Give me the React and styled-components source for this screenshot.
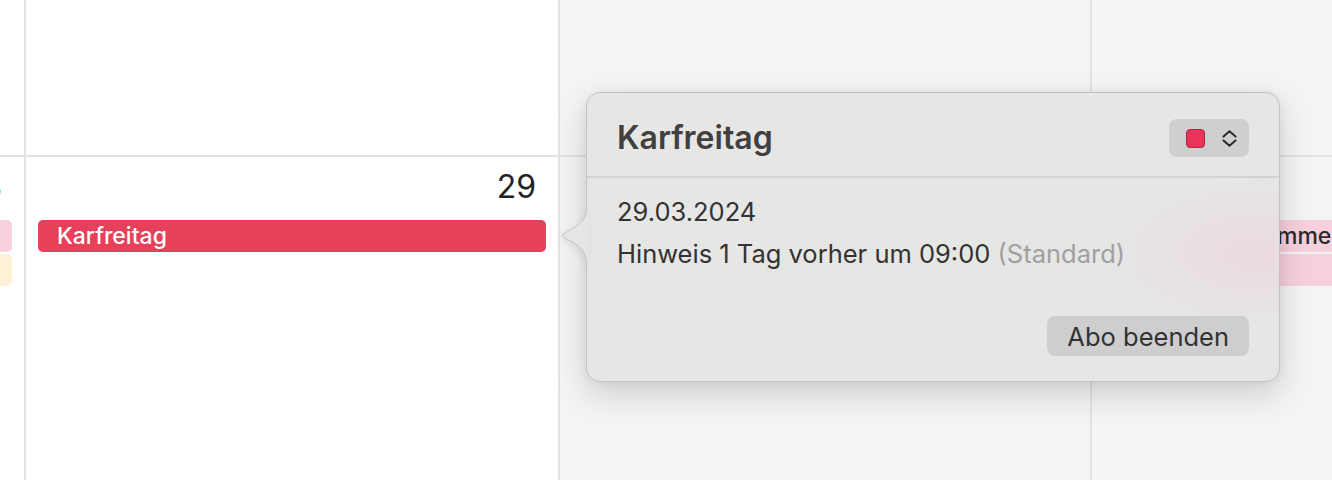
import React from 'react';
import styled, { createGlobalStyle } from 'styled-components';

const GlobalStyle = createGlobalStyle`
    html, body {
        margin: 0;
        padding: 0;
        background: #ffffff;
        overflow: hidden;
    }
    body {
        font-family: Inter, "Liberation Sans", sans-serif;
        -webkit-font-smoothing: antialiased;
    }
`;

const Page = styled.div`
    position: relative;
    width: 1332px;
    height: 480px;
    overflow: hidden;
`;

// month view, scrolled so that only the edge of thursday shows
const MonthGrid = styled.div`
    display: grid;
    grid-template-columns: 532px 532px 530px 532px;
    grid-template-rows: 155px 1fr;
    gap: 2px;
    height: 480px;
    margin-left: -508px;
    background: #e3e3e3;
`;

const DayCell = styled.div`
    display: flex;
    flex-direction: column;
    padding-top: 11px;
    background: ${(p) => (p.$weekend ? '#f4f4f4' : '#ffffff')};
    min-width: 0;
`;

const DayNumber = styled.div`
    display: flex;
    justify-content: flex-end;
    height: 38px;
    padding-right: 22px;
    font-size: 32px;
    line-height: 38px;
    color: #222222;
    white-space: nowrap;
`;

const EventList = styled.div`
    display: flex;
    flex-direction: column;
    gap: 2px;
    margin: 14px 12px 0;
`;

const EventBar = styled.div`
    height: 32px;
    display: flex;
    align-items: center;
    padding-left: 19px;
    border-radius: 5px;
    background: ${(p) => p.$bg};
    color: ${(p) => p.$fg || '#2b2b2b'};
    font-size: 23px;
    font-weight: 500;
    white-space: nowrap;
    overflow: hidden;
`;

const Popover = styled.div`
    position: absolute;
    left: 586px;
    top: 92px;
    width: 694px;
    height: 290px;
    box-sizing: border-box;
    display: flex;
    flex-direction: column;
    border: 1px solid #c3c3c3;
    border-radius: 14px;
    background:
        radial-gradient(ellipse 150px 75px at 670px 160px, rgba(238, 206, 216, 0.5), rgba(238, 206, 216, 0) 100%),
        #e6e6e5;
    box-shadow: 0 12px 32px rgba(0, 0, 0, 0.16), 0 0 8px rgba(0, 0, 0, 0.06);
`;

const Arrow = styled.svg`
    position: absolute;
    left: -26px;
    top: 115px;
    filter: drop-shadow(-2px 2px 3px rgba(0, 0, 0, 0.08));
`;

const Header = styled.div`
    display: flex;
    align-items: center;
    justify-content: space-between;
    padding: 26px 30px 19px 30px;
    border-bottom: 2px solid #d2d2d2;
`;

const Title = styled.h1`
    margin: 0;
    font-size: 32px;
    line-height: 38px;
    font-weight: 600;
    color: #404040;
`;

const ColorPicker = styled.button`
    display: flex;
    align-items: center;
    gap: 17px;
    height: 38px;
    padding: 0 12px 0 17px;
    border: none;
    border-radius: 8px;
    background: #cfcfcf;
`;

const Swatch = styled.span`
    width: 19px;
    height: 19px;
    box-sizing: border-box;
    border-radius: 4px;
    background: #e9345a;
    border: 1.5px solid #b42444;
`;

const Body = styled.div`
    display: flex;
    flex-direction: column;
    padding: 13px 30px 0;
    font-size: 25.5px;
    line-height: 42px;
    color: #333333;
`;

const Muted = styled.span`
    color: #a0a0a0;
`;

const Footer = styled.div`
    display: flex;
    justify-content: flex-end;
    margin-top: auto;
    padding: 0 30px 25px;
`;

const Button = styled.button`
    height: 40px;
    padding: 0 20px;
    border: none;
    border-radius: 8px;
    background: #cecece;
    font-family: inherit;
    font-size: 25.5px;
    color: #333333;
`;

const UpDown = () => (
    <svg width="15" height="17" viewBox="0 0 15 17" fill="none">
        <path d="M1.5 6.5 L7.5 1.2 L13.5 6.5" stroke="#2a2a2a" strokeWidth="2" strokeLinecap="round" strokeLinejoin="round" />
        <path d="M1.5 10.5 L7.5 15.8 L13.5 10.5" stroke="#2a2a2a" strokeWidth="2" strokeLinecap="round" strokeLinejoin="round" />
    </svg>
);

const days = [
    {
        number: 28,
        events: [
            { title: 'Gründonnerstag', bg: '#f8d1dd' },
            { title: 'Geburtstag', bg: '#fdf2d6' },
        ],
    },
    { number: 29, events: [{ title: 'Karfreitag', bg: '#e6405a', fg: '#ffffff' }] },
    { number: 30, weekend: true, events: [] },
    {
        number: 31,
        weekend: true,
        events: [
            { title: 'Beginn der Sommerzeit', bg: '#f7d0dc' },
            { title: 'Ostersonntag', bg: '#f7d0dc' },
        ],
    },
];

export default function App() {
    return (
        <>
            <GlobalStyle />
            <Page>
                <MonthGrid>
                    {/* week row above, empty */}
                    {days.map((d) => (
                        <DayCell key={'top' + d.number} $weekend={d.weekend} />
                    ))}

                    {days.map((d) => (
                        <DayCell key={d.number} $weekend={d.weekend}>
                            <DayNumber>{d.number}</DayNumber>
                            <EventList>
                                {d.events.map((e) => (
                                    <EventBar key={e.title} $bg={e.bg} $fg={e.fg}>
                                        {e.title}
                                    </EventBar>
                                ))}
                            </EventList>
                        </DayCell>
                    ))}
                </MonthGrid>

                <Popover>
                    <Arrow width="27" height="55" viewBox="0 0 27 55">
                        <path
                            d="M27 0 L25.5 0 C25.5 9 22 13 16 18 L2.2 26.2 Q0.5 27.5 2.2 28.8 L16 37 C22 42 25.5 46 25.5 55 L27 55 Z"
                            fill="#e6e6e5"
                        />
                        <path
                            d="M25.5 0 C25.5 9 22 13 16 18 L2.2 26.2 Q0.5 27.5 2.2 28.8 L16 37 C22 42 25.5 46 25.5 55"
                            fill="none"
                            stroke="#c3c3c3"
                            strokeWidth="1"
                        />
                    </Arrow>
                    <Header>
                        <Title>Karfreitag</Title>
                        <ColorPicker>
                            <Swatch />
                            <UpDown />
                        </ColorPicker>
                    </Header>
                    <Body>
                        <div>29.03.2024</div>
                        <div>
                            Hinweis 1 Tag vorher um 09:00 <Muted>(Standard)</Muted>
                        </div>
                    </Body>
                    <Footer>
                        <Button>Abo beenden</Button>
                    </Footer>
                </Popover>
            </Page>
        </>
    );
}
